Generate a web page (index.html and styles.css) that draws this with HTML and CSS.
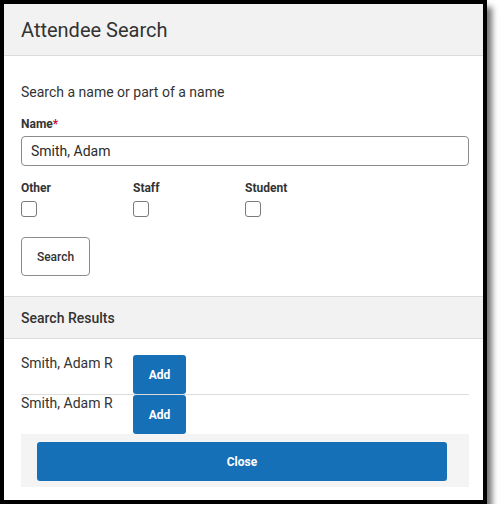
FILE: index.html
```html
<!DOCTYPE html>
<html lang="en">
<head>
<meta charset="utf-8">
<title>Attendee Search</title>
<link rel="stylesheet" href="styles.css">
</head>
<body>
<div class="modal">
  <div class="modal-header">Attendee Search</div>

  <div class="search-form">
    <p class="intro">Search a name or part of a name</p>
    <label class="field-label" for="name">Name<span class="required">*</span></label>
    <input class="text-input" id="name" type="text" value="Smith, Adam">

    <div class="type-grid">
      <div class="type-option">
        <span class="field-label">Other</span>
        <span class="checkbox"></span>
      </div>
      <div class="type-option">
        <span class="field-label">Staff</span>
        <span class="checkbox"></span>
      </div>
      <div class="type-option">
        <span class="field-label">Student</span>
        <span class="checkbox"></span>
      </div>
    </div>

    <button class="btn-outline" type="button">Search</button>
  </div>

  <div class="section-head">Search Results</div>

  <div class="results">
    <div class="result-row">
      <span class="result-name">Smith, Adam R</span>
      <button class="btn-primary btn-add" type="button">Add</button>
    </div>
    <div class="result-row">
      <span class="result-name">Smith, Adam R</span>
      <button class="btn-primary btn-add" type="button">Add</button>
    </div>
    <div class="modal-footer">
      <button class="btn-primary btn-close" type="button">Close</button>
    </div>
  </div>
</div>
</body>
</html>
```

FILE: styles.css
```css
* {
  box-sizing: border-box;
}

body {
  margin: 0;
  background: #fff;
  font-family: Roboto, "Liberation Sans", sans-serif;
  color: #2b2b2b;
}

.modal {
  width: 487px;
  height: 504px;
  border: 4px solid #000;
  background: #fff;
  box-shadow: 5px 7px 6px rgba(0, 0, 0, 0.55);
  display: flex;
  flex-direction: column;
}

.modal-header {
  height: 52px;
  flex: none;
  display: flex;
  align-items: center;
  padding-left: 17px;
  background: #f2f2f2;
  border-bottom: 1px solid #dcdcdc;
  font-size: 20px;
  color: #333;
}

.search-form {
  padding: 26px 14px 0 17px;
}

.intro {
  margin: 0;
  font-size: 14px;
  line-height: 20px;
  color: #333;
}

.field-label {
  display: block;
  font-size: 12px;
  font-weight: 700;
  line-height: 16px;
  color: #333;
}

.search-form > .field-label {
  margin-top: 14px;
}

.required {
  color: #c8102e;
}

.text-input {
  display: block;
  width: 100%;
  height: 30px;
  margin-top: 4px;
  padding: 0 9px;
  border: 1px solid #8c8c8c;
  border-radius: 4px;
  font-family: inherit;
  font-size: 14px;
  color: #2b2b2b;
  background: #fff;
}

.type-grid {
  display: grid;
  grid-template-columns: repeat(3, 112px);
  margin-top: 14px;
}

.checkbox {
  display: block;
  width: 16px;
  height: 16px;
  margin-top: 5px;
  border: 1px solid #7a7a7a;
  border-radius: 3px;
  background: #fff;
}

.btn-outline {
  display: block;
  width: 69px;
  height: 39px;
  margin-top: 20px;
  border: 1px solid #8c8c8c;
  border-radius: 4px;
  background: #fff;
  font-family: inherit;
  font-size: 12px;
  font-weight: 500;
  color: #333;
}

.section-head {
  margin-top: 20px;
  height: 43px;
  display: flex;
  align-items: center;
  padding-left: 17px;
  background: #f2f2f2;
  border-top: 1px solid #dcdcdc;
  border-bottom: 1px solid #dcdcdc;
  font-size: 14px;
  font-weight: 500;
  color: #333;
}

.results {
  padding: 16px 14px 0 17px;
}

.result-row {
  display: flex;
  align-items: flex-start;
}

.result-row + .result-row {
  border-top: 1px solid #dcdcdc;
}

.result-name {
  width: 112px;
  font-size: 14px;
  line-height: 16px;
  color: #333;
}

.btn-primary {
  border: none;
  border-radius: 3px;
  background: #1670b7;
  color: #fff;
  font-family: inherit;
  font-size: 12px;
  font-weight: 700;
}

.btn-add {
  width: 53px;
  height: 39px;
}

.modal-footer {
  padding: 8px 22px 6px 16px;
  background: #f4f4f4;
}

.btn-close {
  display: block;
  width: 100%;
  height: 39px;
}
```
